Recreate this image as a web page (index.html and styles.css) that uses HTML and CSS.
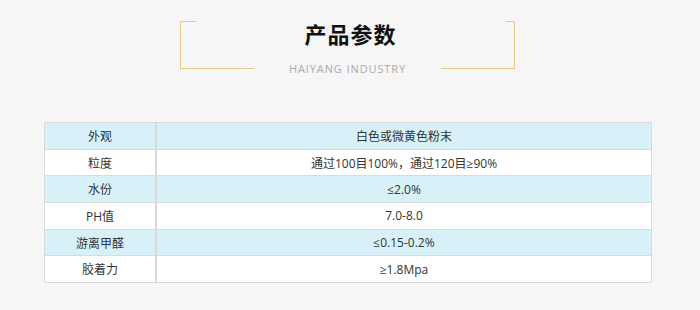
FILE: index.html
```html
<!DOCTYPE html>
<html>
  <head>
    <meta charset="utf-8">
    <link rel="stylesheet" href="styles.css">
  </head>
  <body>
    <div class="section-head">
      <div class="bracket bracket-left"></div>
      <div class="head-center">
        <h2 class="head-title">产品参数</h2>
        <div class="head-sub">HAIYANG INDUSTRY</div>
      </div>
      <div class="bracket bracket-right"></div>
    </div>

    <table class="param-table">
      <tr class="row-blue">
        <td class="param-name">外观</td>
        <td>白色或微黄色粉末</td>
      </tr>
      <tr>
        <td class="param-name">粒度</td>
        <td>通过100目100%，通过120目≥90%</td>
      </tr>
      <tr class="row-blue">
        <td class="param-name">水份</td>
        <td>≤2.0%</td>
      </tr>
      <tr>
        <td class="param-name">PH值</td>
        <td>7.0-8.0</td>
      </tr>
      <tr class="row-blue">
        <td class="param-name">游离甲醛</td>
        <td>≤0.15-0.2%</td>
      </tr>
      <tr>
        <td class="param-name">胶着力</td>
        <td>≥1.8Mpa</td>
      </tr>
    </table>
  </body>
</html>
```

FILE: styles.css
```css
body {
  font-family: 'Open Sans', 'Noto Sans CJK SC', sans-serif;
  margin: 0;
  padding: 21px 0 0 0;
  background-color: #f6f6f6;
  color: #333;
}
.section-head {
  display: flex;
  width: 335px;
  height: 48px;
  margin-left: 180px;
}
.bracket {
  position: relative;
  width: 73px;
  border-bottom: 1px solid #e6c987;
}
.bracket-left {
  border-left: 1px solid #e6c987;
}
.bracket-right {
  border-right: 1px solid #e6c987;
}
.bracket::before {
  content: '';
  position: absolute;
  top: 0;
  height: 1px;
  background-color: #e6c987;
}
.bracket-left::before {
  left: 0;
  width: 15px;
}
.bracket-right::before {
  right: 0;
  width: 8px;
}
.head-center {
  flex: 1;
  display: flex;
  flex-direction: column;
  align-items: center;
}
.head-title {
  margin: 0 0 0 6px;
  font-family: 'Noto Sans CJK SC', sans-serif;
  font-size: 22px;
  font-weight: 700;
  letter-spacing: 1px;
  line-height: 24px;
  color: #111;
}
.head-sub {
  margin-top: 16px;
  font-size: 11px;
  letter-spacing: 0.9px;
  line-height: 16px;
  color: #aaa;
}
.param-table {
  width: 608px;
  margin: 53px 0 0 44px;
  border-collapse: collapse;
  background-color: white;
  font-size: 12px;
}
.param-table td {
  height: 25.7px;
  padding: 0;
  text-align: center;
  border: 1px solid #dadada;
}
.param-table .param-name {
  width: 110px;
  border-right: 2px solid #dadada;
}
.row-blue td {
  background-color: #d8f1f8;
}
```
